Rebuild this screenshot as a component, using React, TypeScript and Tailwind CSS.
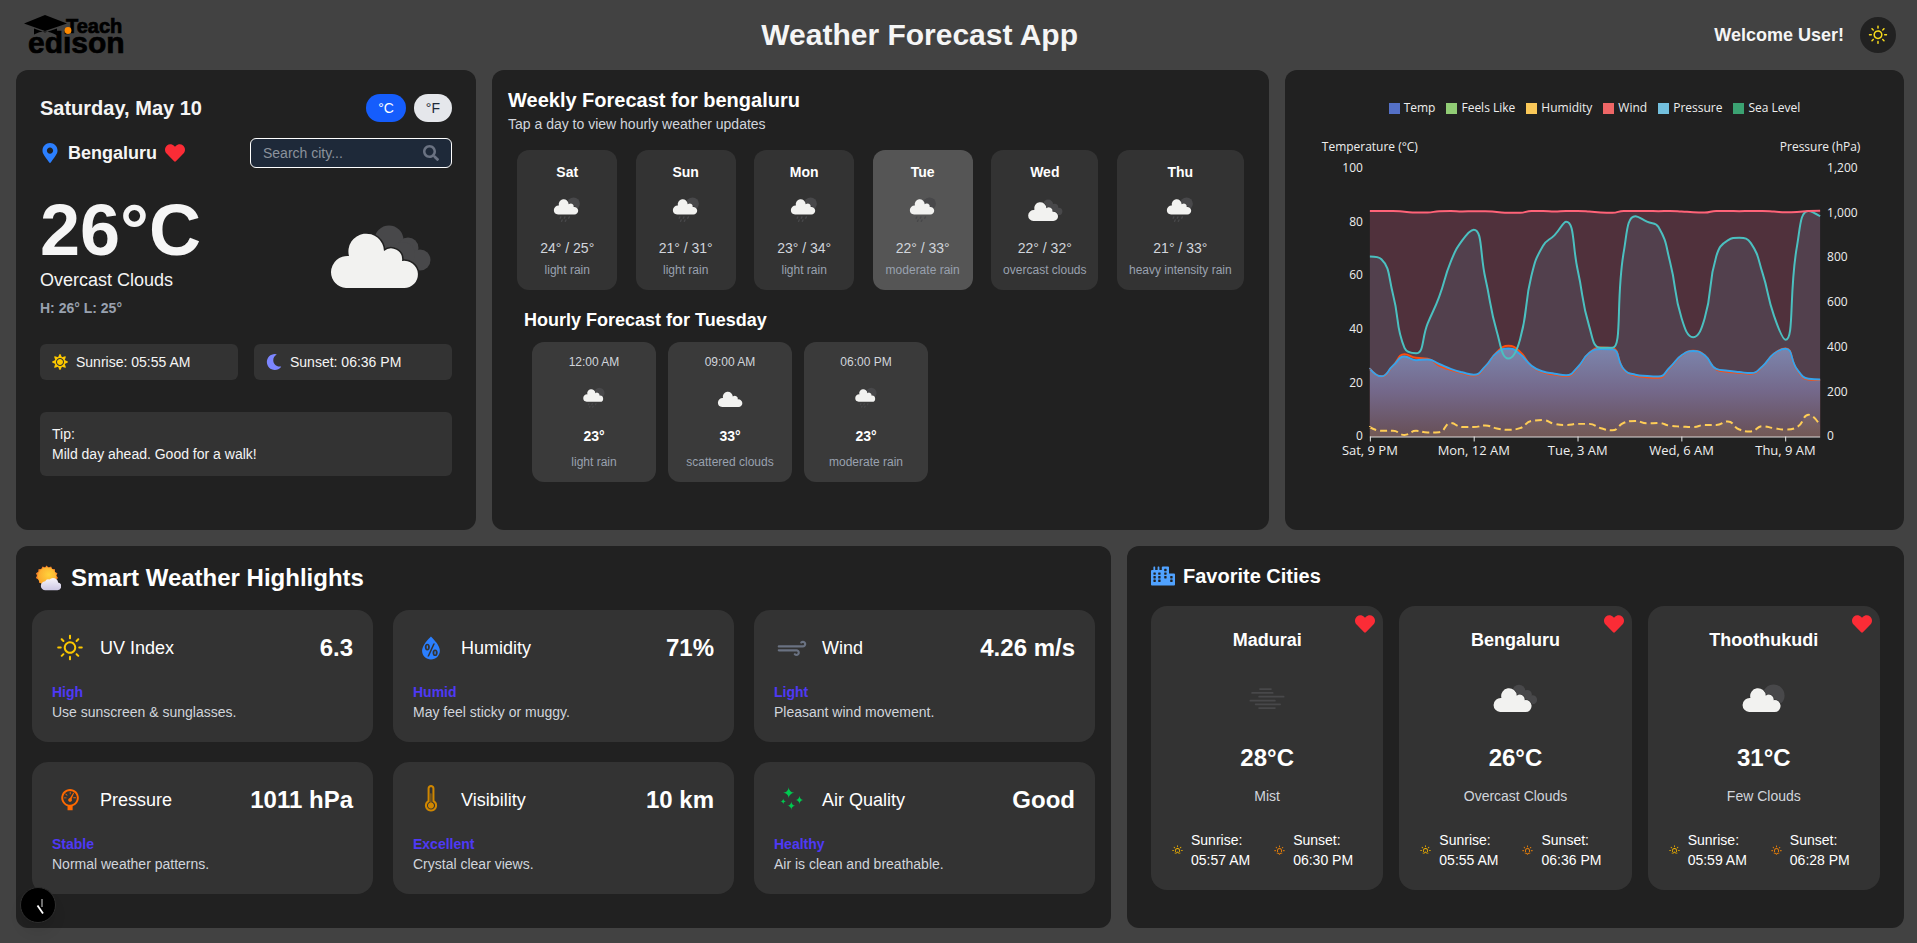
import { useId, useState } from "react";
import type { ReactNode } from "react";
import { FaCity, FaHeart, FaMapMarkerAlt, FaMoon, FaSearch, FaSun } from "react-icons/fa";
import {
  WiBarometer,
  WiDaySunny,
  WiHumidity,
  WiStars,
  WiStrongWind,
  WiSunrise,
  WiSunset,
  WiThermometer,
} from "react-icons/wi";

type Sky = "overcast" | "few" | "scattered" | "rain" | "mist";

const CLOUD =
  "M30 96 A16 16 0 0 1 15 80 A16.5 16.5 0 0 1 33 64 A17.8 17.8 0 1 1 68 59 A11 11 0 0 1 86 69 A13.6 13.6 0 1 1 88 96 Z";

function SkyIcon({ sky, className }: { sky: Sky; className: string }) {
  const id = useId();
  if (sky === "mist") {
    return (
      <svg viewBox="0 0 128 128" className={className} aria-hidden="true">
        <path
          d="M48 43.5H73 M30 52.5H77 M46 61H102 M26 70H82 M38 78.5H94 M46 87H82"
          stroke="#48484a"
          strokeWidth="4"
          strokeLinecap="round"
          fill="none"
        />
      </svg>
    );
  }
  if (sky === "scattered") {
    return (
      <svg viewBox="0 0 128 128" className={className} aria-hidden="true">
        <path d={CLOUD} transform="translate(6 0)" fill="#f2f2f0" />
      </svg>
    );
  }
  const place = sky === "rain" ? "translate(13.5 -1) scale(.815)" : "translate(0 0)";
  return (
    <svg viewBox="0 0 128 128" className={className} aria-hidden="true">
      <mask id={id}>
        <rect width="128" height="128" fill="#fff" />
        <path d={CLOUD} transform={place} fill="#000" stroke="#000" strokeWidth="3" />
      </mask>
      <g mask={`url(#${id})`} fill="#48484a">
        {sky === "overcast" && (
          <>
            <circle cx="73" cy="48" r="14.5" />
            <circle cx="92" cy="56" r="10.5" />
            <circle cx="104" cy="68" r="10.5" />
            <circle cx="87" cy="62" r="12" />
          </>
        )}
        {sky === "few" && <circle cx="86" cy="58" r="25" />}
        {sky === "rain" && <circle cx="83" cy="46" r="18.5" />}
      </g>
      <path d={CLOUD} transform={place} fill="#f2f2f0" />
      {sky === "rain" && (
        <path
          d="M46 84l-2 4 M58 84l-2 4 M71 84l-2 4 M50 93l-2 4 M61 93l-2 4"
          stroke="#48484a"
          strokeWidth="4"
          strokeLinecap="round"
        />
      )}
    </svg>
  );
}

function Logo() {
  return (
    <svg viewBox="0 -4 101 50" className="h-[50px] w-[101px]" role="img" aria-label="Teach Edison">
      <path d="M0 9.5 L21 1 L43 9.5 L21 17 Z" fill="#000" />
      <path d="M10 14.5 L21 18.5 L33 14.5 V21.5 Q21 14 10 20.5 Z" fill="#000" />
      <g
        fontWeight="700"
        fontFamily="Liberation Sans, Arial, sans-serif"
        fill="#000"
        stroke="#000"
        strokeWidth="0.7"
      >
        <text x="42" y="19" fontSize="20">
          Teach
        </text>
        <text x="4" y="39" fontSize="30">
          edison
        </text>
      </g>
      <circle cx="44" cy="16.5" r="3.4" fill="#ff8a00" />
    </svg>
  );
}

function SunBehindCloud() {
  return (
    <svg viewBox="0 0 26 26" className="h-[26px] w-[26px]" aria-hidden="true">
      <defs>
        <radialGradient id="sunFace" cx=".6" cy=".4" r=".65">
          <stop offset="0" stopColor="#ffd23c" />
          <stop offset="1" stopColor="#fba52c" />
        </radialGradient>
        <linearGradient id="cloudFace" x1="0" y1="0" x2="0" y2="1">
          <stop offset="0" stopColor="#f7f5fb" />
          <stop offset="1" stopColor="#cdc8e4" />
        </linearGradient>
      </defs>
      <path
        d="M11.5 0.6l2 1.8 2.6-.9 1.2 2.4 2.7.3v2.7l2.4 1.4-1 2.5 1.6 2.2-2 1.8.2 2.7-2.6.7-1.2 2.5-2.7-.4-2.2 1.6-2-1.8-2.7.6-1.2-2.4-2.6-.6.1-2.7L.9 13l1.1-2.3L1 8.2l2.3-1.4.2-2.6 2.7-.2L7.6 1.5l2.5.9z"
        fill="#f7862a"
      />
      <circle cx="12" cy="11.5" r="9.2" fill="url(#sunFace)" />
      <path
        d="M10.5 25.3a4.5 4.5 0 0 1-.3-9 3.3 3.3 0 0 1 4.2-1.7 5 5 0 0 1 8.7 2.8 4 4 0 0 1-.6 7.9z"
        fill="url(#cloudFace)"
      />
    </svg>
  );
}

/* ---------- chart ---------- */

const LEFT = 85;
const RIGHT = 536;
const BASE = 297;
const HEIGHT = 269;

const humidity = [
  67, 66, 53, 33, 31, 42, 52, 65, 73, 77, 59, 39, 29, 36, 60, 71, 75, 80, 62, 41, 33, 33, 69, 82, 80, 78, 65, 44, 37,
  44, 67, 73, 74, 72, 61, 45, 36, 71, 84, 82,
];
const temperature = [
  25.2, 22.4, 26.3, 29.8, 28.4, 28.7, 27, 25.2, 23.9, 23, 26.1, 31.2, 32.8, 30.7, 26.3, 24.2, 23.4, 22.8, 25.8, 31.1,
  32.6, 32.5, 25, 23, 22.5, 22.3, 25.8, 30.2, 31.8, 30.2, 25.2, 24.5, 24, 23.6, 26.1, 30.8, 32.7, 25, 21.5, 21.2,
];
const feelsLike = [
  25.2, 22.4, 26.3, 30.6, 29.3, 29, 26.4, 24.8, 23.6, 22.7, 26, 31.4, 33.8, 31.6, 26.2, 23.9, 23.1, 22.5, 25.6, 31.1,
  33.1, 32.9, 24.8, 22.7, 22.1, 21.9, 25.6, 30.1, 31.9, 30.2, 25, 24.1, 23.7, 23.4, 26, 30.8, 32.8, 24.8, 21.2, 21,
];
const wind = [
  3.5, 2.1, 2.1, 0.6, 2.1, 1.5, 1.6, 5, 3.5, 3.5, 4.1, 3, 2.5, 3.1, 5.8, 6.1, 4.7, 4.3, 4.7, 4.7, 3.1, 2.3, 5.1, 5.8,
  4.9, 5, 4, 3.7, 3.5, 4.3, 4.3, 5.6, 2.6, 1.9, 3.8, 3.1, 2.6, 3.5, 8.1, 4.1,
];
const pressure = [
  84, 84, 84, 83.7, 83.4, 83.4, 83.9, 84, 83.8, 83.9, 83.9, 83.6, 83.3, 83.3, 84, 84, 83.8, 84, 84, 83.8, 83.4, 83.3,
  84, 84, 84, 83.9, 84, 83.8, 83.5, 83.4, 84, 84, 83.9, 84, 84, 83.8, 83.5, 83.6, 84, 84.1,
];

const clamp = (v: number, a: number, b: number) => Math.max(Math.min(v, Math.max(a, b)), Math.min(a, b));

function curve(values: number[]): string {
  const pts = values.map((v, i) => ({
    x: LEFT + ((RIGHT - LEFT) * i) / (values.length - 1),
    y: BASE - (v / 100) * HEIGHT,
  }));
  let d = `M${pts[0].x} ${pts[0].y}`;
  let outX = pts[0].x;
  let outY = pts[0].y;
  for (let i = 1; i < pts.length; i++) {
    const p = pts[i];
    const prev = pts[i - 1];
    const next = pts[i + 1];
    let inX = p.x;
    let inY = p.y;
    let nx = p.x;
    let ny = p.y;
    if (next) {
      const before = Math.hypot(p.x - prev.x, p.y - prev.y);
      const after = Math.hypot(next.x - p.x, next.y - p.y);
      const r = after / (after + before);
      nx = clamp(p.x + (next.x - prev.x) * 0.5 * r, next.x, p.x);
      ny = clamp(p.y + (next.y - prev.y) * 0.5 * r, next.y, p.y);
      inX = clamp(p.x - ((nx - p.x) * before) / after, prev.x, p.x);
      inY = clamp(p.y - ((ny - p.y) * before) / after, prev.y, p.y);
      nx = p.x + ((p.x - inX) * after) / before;
      ny = p.y + ((p.y - inY) * after) / before;
    }
    d += `C${outX.toFixed(2)} ${outY.toFixed(2)} ${inX.toFixed(2)} ${inY.toFixed(2)} ${p.x.toFixed(2)} ${p.y.toFixed(2)}`;
    outX = nx;
    outY = ny;
  }
  return d;
}

const area = (values: number[]) => `${curve(values)}L${RIGHT} ${BASE}L${LEFT} ${BASE}Z`;

const legend = [
  { name: "Temp", swatch: "bg-[#5470c6]" },
  { name: "Feels Like", swatch: "bg-[#91cc75]" },
  { name: "Humidity", swatch: "bg-[#fac858]" },
  { name: "Wind", swatch: "bg-[#ee6666]" },
  { name: "Pressure", swatch: "bg-[#73c0de]" },
  { name: "Sea Level", swatch: "bg-[#3ba272]" },
];

function ForecastChart() {
  const days = ["Sat, 9 PM", "Mon, 12 AM", "Tue, 3 AM", "Wed, 6 AM", "Thu, 9 AM"];
  return (
    <section className="rounded-xl bg-[#212121] pt-7 font-['Open_Sans','Noto_Sans',sans-serif] font-medium">
      <ul className="flex justify-center gap-[11px] text-xs leading-5 text-[#eeeeee]">
        {legend.map((l) => (
          <li key={l.name} className="flex items-center gap-1">
            <span className={`h-[11px] w-[11px] ${l.swatch}`} />
            {l.name}
          </li>
        ))}
      </ul>
      <svg viewBox="0 -10 620 360" className="mt-3 w-full" role="img" aria-label="Forecast chart">
        <defs>
          <linearGradient id="tempFill" gradientUnits="userSpaceOnUse" x1="0" y1="207" x2="0" y2="297">
            <stop offset="0" stopColor="#7c86ae" />
            <stop offset="0.5" stopColor="#74688a" />
            <stop offset="1" stopColor="#674f56" />
          </linearGradient>
        </defs>
        <path d={area(pressure)} fill="#ff6ca0" fillOpacity=".21" />
        <path d={area(humidity)} fill="#62a8c0" fillOpacity=".13" />
        <path d={area(feelsLike)} fill="#ff4500" fillOpacity=".3" />
        <path d={area(temperature)} fill="url(#tempFill)" />
        <path d={area(wind)} fill="#ffcd56" fillOpacity=".08" />
        <g fill="none" strokeWidth="2" strokeLinejoin="round">
          <path d={curve(feelsLike)} stroke="#ff4d0d" />
          <path d={curve(temperature)} stroke="#36a2eb" />
          <path d={curve(humidity)} stroke="#4bc0c0" />
          <path d={curve(wind)} stroke="#ffcd56" strokeDasharray="7 4" />
          <path d={curve(pressure)} stroke="#ff6378" />
        </g>
        <path d={`M${LEFT} ${BASE + 0.5}H${RIGHT}`} stroke="#e5e5e5" />
        <g fill="#eeeeee" fontSize="12">
          <text x="85" y="11" textAnchor="middle">
            Temperature (°C)
          </text>
          <text x="536" y="11" textAnchor="middle">
            Pressure (hPa)
          </text>
          {[0, 20, 40, 60, 80, 100].map((n) => (
            <text key={n} x="78" y={BASE - n * 2.69 + 4} textAnchor="end">
              {n}
            </text>
          ))}
          {[0, 200, 400, 600, 800, 1000, 1200].map((n) => (
            <text key={n} x="543" y={BASE - (n / 1200) * HEIGHT + 4}>
              {n.toLocaleString("en-US")}
            </text>
          ))}
        </g>
        {days.map((d, i) => {
          const x = LEFT + ((RIGHT - LEFT) * i * 9) / 39;
          return (
            <g key={d}>
              <path d={`M${Math.round(x) + 0.5} ${BASE}v5`} stroke="#e5e5e5" />
              <text x={x} y={BASE + 19} textAnchor="middle" fontSize="13" fill="#eeeeee">
                {d}
              </text>
            </g>
          );
        })}
      </svg>
    </section>
  );
}

/* ---------- panels ---------- */

function CurrentWeather() {
  return (
    <section className="rounded-xl bg-[#212121] p-6 text-[#f5f5f5]">
      <div className="flex items-center justify-between">
        <h2 className="text-xl font-bold">Saturday, May 10</h2>
        <div className="flex gap-2 text-sm">
          <button type="button" className="rounded-full bg-[#155dfc] px-3 py-1 text-white">
            °C
          </button>
          <button type="button" className="rounded-full bg-gray-200 px-3 py-1 text-gray-800">
            °F
          </button>
        </div>
      </div>
      <div className="mt-4 flex items-center justify-between">
        <div className="flex items-center gap-2">
          <FaMapMarkerAlt className="h-5 w-5 text-[#2b7fff]" />
          <span className="text-lg leading-7 font-bold">Bengaluru</span>
          <button type="button" aria-label="Toggle favorite">
            <FaHeart className="h-5 w-5 text-[#fb2c36]" />
          </button>
        </div>
        <label className="flex h-[30px] w-[202px] items-center rounded-md border border-white bg-[#1e2939] px-3">
          <input
            type="text"
            aria-label="Search city"
            placeholder="Search city..."
            className="min-w-0 flex-1 bg-transparent text-sm outline-none placeholder:text-[#8b929c]"
          />
          <FaSearch className="h-4 w-4 text-[#6a7282]" />
        </label>
      </div>
      <div className="mt-6 flex items-center justify-between pr-2">
        <div>
          <p className="text-7xl leading-none font-bold">26°C</p>
          <p className="text-lg leading-7">Overcast Clouds</p>
          <p className="mt-1 text-sm font-bold text-[#99a1af]">H: 26° L: 25°</p>
        </div>
        <SkyIcon sky="overcast" className="h-32 w-32" />
      </div>
      <div className="mt-6 grid grid-cols-2 gap-4 text-sm">
        <p className="flex items-center gap-2 rounded-md bg-[#333333] px-3 py-2">
          <FaSun className="h-4 w-4 text-[#fcc800]" />
          Sunrise: 05:55 AM
        </p>
        <p className="flex items-center gap-2 rounded-md bg-[#333333] px-3 py-2">
          <FaMoon className="h-4 w-4 text-[#7c86ff]" />
          Sunset: 06:36 PM
        </p>
      </div>
      <div className="mt-8 rounded-md bg-[#333333] p-3 text-sm">
        <p>Tip:</p>
        <p>Mild day ahead. Good for a walk!</p>
      </div>
    </section>
  );
}

const week: { day: string; sky: Sky; range: string; text: string }[] = [
  { day: "Sat", sky: "rain", range: "24° / 25°", text: "light rain" },
  { day: "Sun", sky: "rain", range: "21° / 31°", text: "light rain" },
  { day: "Mon", sky: "rain", range: "23° / 34°", text: "light rain" },
  { day: "Tue", sky: "rain", range: "22° / 33°", text: "moderate rain" },
  { day: "Wed", sky: "overcast", range: "22° / 32°", text: "overcast clouds" },
  { day: "Thu", sky: "rain", range: "21° / 33°", text: "heavy intensity rain" },
];

const hours: { time: string; sky: Sky; temp: string; text: string }[] = [
  { time: "12:00 AM", sky: "rain", temp: "23°", text: "light rain" },
  { time: "09:00 AM", sky: "scattered", temp: "33°", text: "scattered clouds" },
  { time: "06:00 PM", sky: "rain", temp: "23°", text: "moderate rain" },
];

function WeeklyForecast() {
  const [selected, setSelected] = useState("Tue");
  return (
    <section className="rounded-xl bg-[#212121] p-4 text-white">
      <h2 className="text-xl font-bold">Weekly Forecast for bengaluru</h2>
      <p className="text-sm text-[#d1d5dc]">Tap a day to view hourly weather updates</p>
      <div className="mt-4 flex justify-around">
        {week.map((d) => (
          <button
            key={d.day}
            type="button"
            onClick={() => setSelected(d.day)}
            className={`flex min-w-[100px] flex-col items-center rounded-xl p-3 ${
              selected === d.day ? "bg-[#555555]" : "bg-[#333333]"
            }`}
          >
            <span className="text-sm font-bold">{d.day}</span>
            <SkyIcon sky={d.sky} className="my-1.5 h-11 w-11" />
            <span className="text-sm text-[#d1d5dc]">{d.range}</span>
            <span className="mt-1 text-xs text-[#99a1af]">{d.text}</span>
          </button>
        ))}
      </div>
      <div className="mt-4 px-4">
        <h3 className="text-lg leading-7 font-bold">Hourly Forecast for Tuesday</h3>
        <div className="flex gap-3 p-2">
          {hours.map((h) => (
            <div key={h.time} className="flex w-[124px] flex-col items-center rounded-xl bg-[#3a3a3a] p-3">
              <span className="text-xs text-[#d1d5dc]">{h.time}</span>
              <SkyIcon sky={h.sky} className="my-2.5 h-9 w-9" />
              <span className="text-sm font-bold">{h.temp}</span>
              <span className="mt-2 text-xs text-[#99a1af]">{h.text}</span>
            </div>
          ))}
        </div>
      </div>
    </section>
  );
}

const highlights: { icon: ReactNode; label: string; value: string; status: string; text: string }[] = [
  {
    icon: <WiDaySunny className="h-9 w-9 text-[#fcc800]" />,
    label: "UV Index",
    value: "6.3",
    status: "High",
    text: "Use sunscreen & sunglasses.",
  },
  {
    icon: <WiHumidity className="h-9 w-9 text-[#2b7fff]" />,
    label: "Humidity",
    value: "71%",
    status: "Humid",
    text: "May feel sticky or muggy.",
  },
  {
    icon: <WiStrongWind className="h-9 w-9 text-[#6a7282]" />,
    label: "Wind",
    value: "4.26 m/s",
    status: "Light",
    text: "Pleasant wind movement.",
  },
  {
    icon: <WiBarometer className="h-9 w-9 text-[#ff6900]" />,
    label: "Pressure",
    value: "1011 hPa",
    status: "Stable",
    text: "Normal weather patterns.",
  },
  {
    icon: <WiThermometer className="h-9 w-9 text-[#d08700]" />,
    label: "Visibility",
    value: "10 km",
    status: "Excellent",
    text: "Crystal clear views.",
  },
  {
    icon: <WiStars className="h-9 w-9 text-[#00c950]" />,
    label: "Air Quality",
    value: "Good",
    status: "Healthy",
    text: "Air is clean and breathable.",
  },
];

function Highlights() {
  return (
    <section className="rounded-xl bg-[#212121] p-4 text-white">
      <h2 className="flex items-center gap-2.5 pl-[3px] text-2xl font-bold">
        <SunBehindCloud />
        Smart Weather Highlights
      </h2>
      <div className="mt-4 grid grid-cols-3 gap-5">
        {highlights.map((h) => (
          <article key={h.label} className="rounded-2xl bg-[#333333] p-5">
            <div className="flex items-center gap-3">
              {h.icon}
              <h3 className="text-lg leading-7">{h.label}</h3>
              <p className="ml-auto text-2xl font-bold">{h.value}</p>
            </div>
            <p className="mt-4 text-sm font-bold text-[#4f39f6]">{h.status}</p>
            <p className="text-sm text-[#d1d5dc]">{h.text}</p>
          </article>
        ))}
      </div>
    </section>
  );
}

const cities: { name: string; sky: Sky; temp: string; text: string; rise: string; set: string }[] = [
  { name: "Madurai", sky: "mist", temp: "28°C", text: "Mist", rise: "05:57 AM", set: "06:30 PM" },
  { name: "Bengaluru", sky: "overcast", temp: "26°C", text: "Overcast Clouds", rise: "05:55 AM", set: "06:36 PM" },
  { name: "Thoothukudi", sky: "few", temp: "31°C", text: "Few Clouds", rise: "05:59 AM", set: "06:28 PM" },
];

function FavoriteCities() {
  return (
    <section className="rounded-xl bg-[#212121] px-6 py-4 text-white">
      <h2 className="flex items-center gap-2 text-xl font-bold">
        <FaCity className="h-6 w-6 text-[#50a2ff]" />
        Favorite Cities
      </h2>
      <div className="mt-4 grid grid-cols-3 gap-4">
        {cities.map((c) => (
          <article key={c.name} className="relative flex flex-col items-center rounded-2xl bg-[#333333] p-5">
            <button type="button" aria-label={`Remove ${c.name}`} className="absolute top-2 right-2">
              <FaHeart className="h-5 w-5 text-[#fb2c36]" />
            </button>
            <h3 className="text-lg leading-7 font-bold">{c.name}</h3>
            <SkyIcon sky={c.sky} className="my-4 h-14 w-14" />
            <p className="text-2xl font-bold">{c.temp}</p>
            <p className="mt-3 text-sm text-[#d1d5dc]">{c.text}</p>
            <div className="mt-6 grid w-full grid-cols-2 gap-3 text-sm">
              <p className="flex items-center gap-[7px]">
                <WiSunrise className="h-[13px] w-[13px] shrink-0 text-[#f0b100]" />
                <span>
                  Sunrise:
                  <br />
                  {c.rise}
                </span>
              </p>
              <p className="flex items-center gap-[7px]">
                <WiSunset className="h-[13px] w-[13px] shrink-0 text-[#ff8904]" />
                <span>
                  Sunset:
                  <br />
                  {c.set}
                </span>
              </p>
            </div>
          </article>
        ))}
      </div>
    </section>
  );
}

export default function App() {
  return (
    <div className="min-h-screen bg-[#424242] pr-[13px] pb-[15px] pl-4 font-['Liberation_Sans',Arial,sans-serif]">
      <header className="flex h-[70px] items-center justify-between px-2">
        <Logo />
        <h1 className="text-3xl font-bold text-[#f5f5f5]">Weather Forecast App</h1>
        <div className="flex items-center gap-4">
          <span className="text-lg leading-7 font-bold text-[#f5f5f5]">Welcome User!</span>
          <button type="button" aria-label="Toggle theme" className="rounded-full bg-[#212121] p-[5px]">
            <WiDaySunny className="h-[26px] w-[26px] text-[#f8dc1c]" />
          </button>
        </div>
      </header>
      <main className="flex flex-col gap-4">
        <div className="grid min-h-[460px] grid-cols-[460fr_777fr_619fr] gap-4">
          <CurrentWeather />
          <WeeklyForecast />
          <ForecastChart />
        </div>
        <div className="grid min-h-[382px] grid-cols-[1095fr_777fr] gap-4">
          <Highlights />
          <FavoriteCities />
        </div>
      </main>
      <button
        type="button"
        aria-label="Open developer tools"
        className="fixed bottom-5 left-5 flex h-9 w-9 items-center justify-center rounded-full border border-[#2e2e2e] bg-black shadow-lg"
      >
        <svg viewBox="0 0 36 36" className="h-9 w-9 shrink-0" aria-hidden="true">
          <path d="M17.5 18.5L23 26.5" stroke="#fff" strokeWidth="1.8" />
          <path d="M22 12V20" stroke="#8a8a8a" strokeWidth="1.6" />
        </svg>
      </button>
    </div>
  );
}
